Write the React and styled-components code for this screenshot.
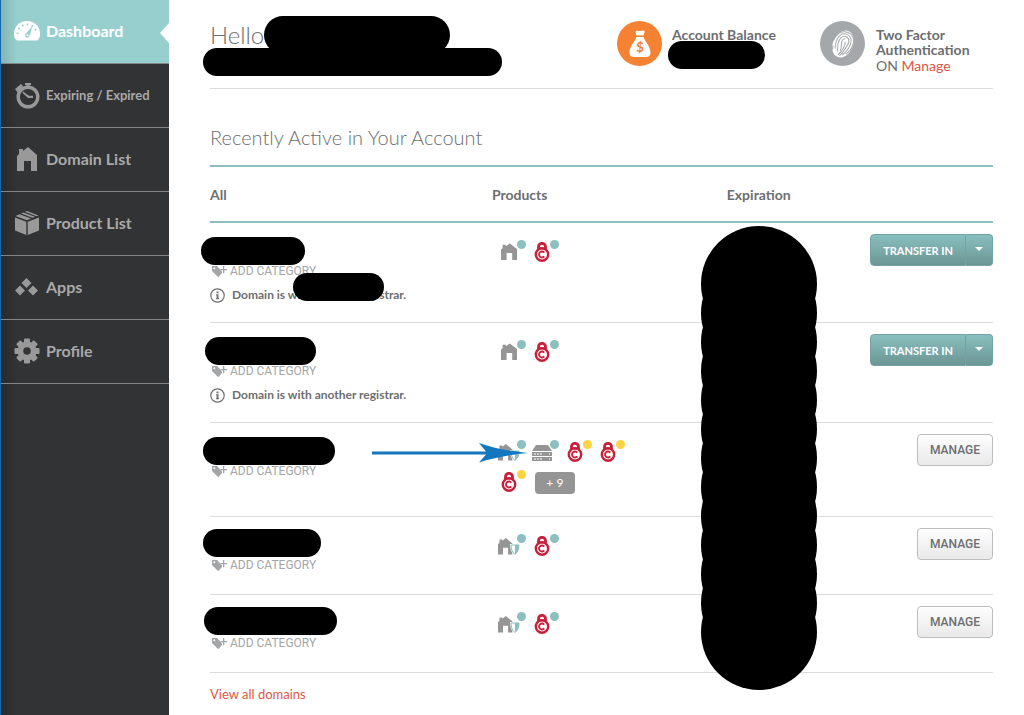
import styled, { createGlobalStyle } from "styled-components";

const colors = {
  text: "#6d6e70",
  light: "#a3a5a7",
  line: "#dcdcdc",
  teal: "#8bbfc0",
  yellow: "#ffd344",
  red: "#c8203a",
  link: "#e0563f",
  icon: "#959595",
};

const GlobalStyle = createGlobalStyle`
  * {
    box-sizing: border-box;
  }
  body {
    margin: 0;
    background: #fff;
    color: ${colors.text};
    font-family: Lato, "Open Sans", sans-serif;
    font-size: 14px;
  }
  a {
    text-decoration: none;
  }
`;

const Page = styled.div`
  display: flex;
  min-height: 100vh;
`;

const Sidebar = styled.nav`
  flex: 0 0 169px;
  border-left: 1px solid #1266b0;
  background: linear-gradient(to right, #29292b, #323335 16px);
`;

const NavItem = styled.a`
  position: relative;
  display: flex;
  align-items: center;
  gap: 6px;
  height: 64px;
  padding: 0 0 2px 13px;
  border-bottom: 1px solid #858585;
  color: ${(props) => (props.$active ? "#fff" : "#a9a9a9")};
  background: ${(props) =>
    props.$active
      ? "linear-gradient(to right, #82b5b4, #97cfce 16px)"
      : "transparent"};
  font-size: ${(props) => (props.$small ? 13 : 16)}px;
  font-weight: 700;

  svg {
    flex: none;
    fill: ${(props) => (props.$active ? "#fff" : "#999")};
  }

  &::after {
    content: "";
    display: ${(props) => (props.$active ? "block" : "none")};
    position: absolute;
    right: 0;
    top: 23px;
    border: 10px solid transparent;
    border-left: 0;
    border-right: 9px solid #fff;
  }
`;

const Main = styled.main`
  flex: 1;
  min-width: 0;
  padding: 0 31px 0 41px;
`;

const Header = styled.header`
  display: flex;
  height: 89px;
  border-bottom: 1px solid ${colors.line};
`;

const Greeting = styled.div`
  position: relative;
  flex: 1;
  padding-top: 21px;
`;

const Hello = styled.h1`
  margin: 0;
  font-size: 24px;
  line-height: 28px;
  font-weight: 300;
`;

const Stat = styled.div`
  position: relative;
  display: flex;
  gap: ${(props) => props.$gap}px;
  width: ${(props) => props.$width}px;
  padding-top: 21px;
`;

const StatIcon = styled.div`
  display: flex;
  align-items: center;
  justify-content: center;
  flex: none;
  width: 45px;
  height: 45px;
  border-radius: 50%;
  color: #fff;
  background: ${(props) => props.$color};
`;

const StatText = styled.div`
  padding-top: 6px;
  line-height: 15px;

  strong {
    display: block;
  }
  span {
    display: block;
    line-height: 18px;
  }
`;

const TextLink = styled.a`
  color: ${colors.link};
`;

const Title = styled.h2`
  margin: 0;
  padding: 36px 0 16px;
  border-bottom: 2px solid ${colors.teal};
  font-size: 20px;
  line-height: 24px;
  font-weight: 300;
`;

const Table = styled.table`
  width: 100%;
  table-layout: fixed;
  border-collapse: separate;
  border-spacing: 0;

  th {
    height: 56px;
    padding: 0;
    border-bottom: 2px solid ${colors.teal};
    text-align: left;
  }
  td {
    position: relative;
    height: 78px;
    padding: 11px 0 18px;
    border-bottom: 1px solid ${colors.line};
    vertical-align: top;
  }
`;

const DomainName = styled.div`
  height: 28px;
`;

const Redaction = styled.span`
  position: absolute;
  left: ${(props) => props.$left}px;
  top: ${(props) => props.$top}px;
  width: ${(props) => props.$width}px;
  height: ${(props) => props.$height || 28}px;
  border-radius: 20px;
  background: #000;
`;

const CategoryButton = styled.button`
  display: flex;
  align-items: center;
  gap: 2px;
  height: 18px;
  padding: 0 0 0 2px;
  border: 0;
  background: none;
  color: ${colors.light};
  font: 400 12px/18px Roboto, sans-serif;
`;

const Note = styled.p`
  display: flex;
  align-items: center;
  gap: 7px;
  margin: 6px 0 0;
  font-size: 12px;
  line-height: 18px;
  font-weight: 700;
`;

const Products = styled.div`
  display: flex;
  flex-wrap: wrap;
  width: 136px;
  padding: 0 0 4px 1px;
`;

const Slot = styled.span`
  position: relative;
  display: flex;
  justify-content: center;
  width: 33px;
  height: 30px;
  padding-top: 8px;

  &::after {
    content: "";
    position: absolute;
    left: 24px;
    top: 6px;
    width: 9px;
    height: 9px;
    border-radius: 50%;
    background: ${(props) => (props.$expiring ? colors.yellow : colors.teal)};
  }
`;

const MoreButton = styled.button`
  width: 40px;
  height: 22px;
  margin: 8px 0 0 9px;
  padding: 0;
  border: 0;
  border-radius: 4px;
  background: ${colors.icon};
  color: #fff;
  font: 400 12px/22px Lato, sans-serif;
`;

const Actions = styled.div`
  display: flex;
  justify-content: flex-end;
`;

const Button = styled.button`
  height: 32px;
  padding: 0 12px;
  border: 1px solid #bdbdbd;
  border-radius: 4px;
  background: linear-gradient(#fefefe, #e9e9e9);
  color: ${colors.text};
  font: 500 12px Roboto, sans-serif;
`;

const TealButton = styled(Button)`
  border-color: #74a3a3;
  border-radius: 4px 0 0 4px;
  background: linear-gradient(#88bfbe, #6c9695);
  color: #fff;
  font: 700 11px Lato, sans-serif;
`;

const CaretButton = styled(TealButton)`
  display: flex;
  align-items: center;
  justify-content: center;
  width: 27px;
  padding: 0 0 2px;
  border-left: 0;
  border-radius: 0 4px 4px 0;
`;

const ColumnMask = styled.svg`
  position: absolute;
  z-index: 1;
  left: -27px;
  top: 2px;
`;

const Arrow = styled.svg`
  position: absolute;
  z-index: 1;
  left: -121px;
  top: 19px;
`;

const Footer = styled.p`
  margin: 0;
  padding: 12px 0;
  line-height: 18px;
  font-size: 13px;
`;

const housePath = "M0 24V9l2-2V2h4v2l5-4 9 8v16h-6V14H7v10z";

const GaugeIcon = () => (
  <svg width="26" height="20" viewBox="0 0 26 20">
    <path d="M3 19.500C1 18.500 0 16 0 13 0 5.500 5.500 0 13 0s13 5.500 13 13c0 3-1 5.500-3 6.500z" />
    <path
      d="M3.500 13a9.500 9.500 0 0 1 19 0"
      fill="none"
      stroke="#97cfce"
      strokeWidth="2"
      strokeDasharray="1.500 3.400"
    />
    <path d="M18.500 5l-3 10a2.300 2.300 0 1 1-3.500-2.500z" fill="#97cfce" />
    <circle cx="13.500" cy="14.200" r="1" />
  </svg>
);

const ClockIcon = () => (
  <svg width="26" height="28" viewBox="0 0 26 28">
    <circle cx="14" cy="16" r="9.800" fill="none" stroke="#999" strokeWidth="3.400" />
    <path d="M11 2h6v2h-1.500v3h-3V4H11zM1 8l6-5 2 2-5 7zM9 10.500l6 4.300h4V17h-5l-5.500-5z" />
  </svg>
);

const HomeIcon = () => (
  <svg width="26" height="24" viewBox="-3 0 26 24">
    <path d={housePath} />
  </svg>
);

const BoxIcon = () => (
  <svg width="26" height="26" viewBox="0 0 26 26">
    <path d="M1 7.500l11.300 4.200V25L1 20.500zM25 7.500l-11.300 4.200V25L25 20.500zM1.500 6l4-1.800L17 8.500l-4 1.700zM7 3.500l2.300-1L21 6.800l-2.500 1zM10.800 1.800L13 1l11.500 4.500-2 .8z" />
  </svg>
);

const AppsIcon = () => (
  <svg width="26" height="18" viewBox="0 0 26 18">
    <path d="M12.500 0l5 5-5 5-5-5zM6 7.500l5 5-5 5-5-5zM19 7.500l5 5-5 5-5-5z" />
  </svg>
);

const GearIcon = () => (
  <svg width="26" height="26" viewBox="0 0 26 26">
    {[0, 45, 90, 135].map((angle) => (
      <rect
        key={angle}
        x="10"
        y="0.500"
        width="6"
        height="25"
        rx="1"
        transform={`rotate(${angle} 13 13)`}
      />
    ))}
    <circle cx="13" cy="13" r="9.500" />
    <circle cx="13" cy="13" r="3.800" fill="#323335" />
  </svg>
);

const MoneyBagIcon = () => (
  <svg width="22" height="28" viewBox="0 0 22 28">
    <path
      d="M7 1c2-1 3 .5 4.500 0S14 0 15.500 1c.6 1-.7 3-1 4.500h-7C7.200 4 6 2 7 1zM7.500 7h7c1 4 7 9 7 15.500 0 3-1.500 4.500-4.500 4.500H5c-3 0-4.500-1.500-4.500-4.500C.5 16 6.500 11 7.500 7z"
      fill="#fff"
    />
    <text
      x="11"
      y="22"
      textAnchor="middle"
      fontSize="13"
      fontWeight="700"
      fill="#f58233"
    >
      $
    </text>
  </svg>
);

const FingerprintIcon = () => (
  <svg width="28" height="30" viewBox="0 0 28 30">
    <g transform="rotate(24 14 15)">
      <ellipse cx="14" cy="15" rx="10" ry="14" fill="#fff" />
      <g fill="none" stroke="#a5a8ab">
        <path d="M14 9.500c-2.500 0-2.500 4-1.500 6s2 4 1.500 7" />
        <path d="M11.500 24c0-3-1.500-4.500-2.200-7.500C8.500 12 9.500 7 14 7s5 5 4.500 8-1 8-3 12" />
        <path d="M8.500 22.500C8 19.500 6.500 18 6.700 13 7 8 9.500 4.500 14 4.500s7 4 7 9-1.500 9-3.500 12" />
        <path d="M4 16c-.5-7 3-13.500 10-13.500S23.500 8 23.500 13s-1 7.500-3 10" />
        <path d="M15 12c1.500 3 1.500 8-1 15M5.500 20.500c.5 1 .8 2.500 1 4" />
      </g>
    </g>
  </svg>
);

const TagIcon = () => (
  <svg width="16" height="12" viewBox="0 0 16 12" fill="#a3a5a7">
    <path d="M0 1h5l5 5.500V8l-3.500 4H6L0 6z" />
    <circle cx="2.300" cy="3.200" r="1" fill="#fff" />
    <path d="M6 1l5 5" stroke="#fff" />
    <path d="M11 1h1.300v3H15v1.300h-2.700v3H11v-3H8.500V4H11z" />
  </svg>
);

const InfoIcon = () => (
  <svg width="15" height="15" viewBox="0 0 15 15" fill="#6d6e70">
    <circle cx="7.500" cy="7.500" r="6.700" fill="none" stroke="#6d6e70" strokeWidth="1.200" />
    <path d="M6.500 3.500h2v1.700h-2zM6 6.300h2.500v4h.7v1H5.900v-1h.7v-3H6z" />
  </svg>
);

const HouseProduct = () => (
  <svg width="16" height="18" viewBox="0 -2 20 26" preserveAspectRatio="none">
    <path d={housePath} fill={colors.icon} />
  </svg>
);

const ShieldedHouse = () => (
  <svg width="22" height="20" viewBox="0 0 22 20">
    <g transform="translate(0 2) scale(.72 .69)">
      <path d={housePath} fill={colors.icon} />
    </g>
    <path
      d="M12 8h10c0 5.500-1.500 8.500-4.900 11.500C13.500 17 12 14 12 8z"
      fill="#fff"
    />
    <path
      d="M13 9h8c0 4.500-1.200 7-4 9.500-2.800-2.500-4-5-4-9.500z"
      fill="none"
      stroke="#8bbfc0"
    />
    <path d="M17 9h4c0 4.500-1.200 7-4 9.500z" fill="#8bbfc0" />
  </svg>
);

const ServerProduct = () => (
  <svg width="20" height="19" viewBox="0 0 20 19" fill={colors.icon}>
    <path d="M4 3h12l4 6H0zM0 10h20v4H0zM0 15h20v4H0z" />
    <path d="M2 12h2m1 0h2m1 0h2m7 0h1M2 17h2m1 0h2m1 0h2m7 0h1" stroke="#fff" />
  </svg>
);

const LockProduct = () => (
  <svg width="16" height="20" viewBox="0 0 16 20" fill="none" stroke={colors.red}>
    <path d="M4.500 7V4.800a3.500 3.500 0 0 1 7 0V7" strokeWidth="2.800" />
    <circle cx="8" cy="12.500" r="6.200" strokeWidth="2.400" fill="#fff" />
    <path d="M4 6.500h8" strokeWidth="2" />
    <path d="M10.300 10.600a3 3 0 1 0 0 3.800" strokeWidth="1.800" />
  </svg>
);

const icons = {
  house: HouseProduct,
  shield: ShieldedHouse,
  server: ServerProduct,
  lock: LockProduct,
};

const navigation = [
  { label: "Dashboard", Icon: GaugeIcon, active: true },
  { label: "Expiring / Expired", Icon: ClockIcon, small: true },
  { label: "Domain List", Icon: HomeIcon },
  { label: "Product List", Icon: BoxIcon },
  { label: "Apps", Icon: AppsIcon },
  { label: "Profile", Icon: GearIcon },
];

const domains = [
  {
    mask: { $left: -9, $top: 14, $width: 104 },
    noteMask: { $left: 83, $top: 50, $width: 91 },
    products: ["house", "lock"],
    external: true,
    expirationMask: true,
  },
  {
    mask: { $left: -5, $top: 14, $width: 111 },
    products: ["house", "lock"],
    external: true,
  },
  {
    mask: { $left: -7, $top: 14, $width: 132 },
    products: ["shield", "server", "lock:expiring", "lock:expiring", "lock:expiring"],
    more: 9,
    arrow: true,
  },
  {
    mask: { $left: -7, $top: 12, $width: 118 },
    products: ["shield", "lock"],
  },
  {
    mask: { $left: -6, $top: 12, $width: 133 },
    products: ["shield", "lock"],
  },
];

function DomainRow({ domain }) {
  return (
    <tr>
      <td>
        <DomainName />
        <CategoryButton type="button">
          <TagIcon />
          ADD CATEGORY
        </CategoryButton>
        {domain.external && (
          <Note>
            <InfoIcon />
            Domain is with another registrar.
          </Note>
        )}
        <Redaction {...domain.mask} />
        {domain.noteMask && <Redaction {...domain.noteMask} />}
      </td>
      <td>
        <Products>
          {domain.products.map((product, index) => {
            const [name, state] = product.split(":");
            const Icon = icons[name];
            return (
              <Slot key={index} $expiring={state === "expiring"}>
                <Icon />
              </Slot>
            );
          })}
          {domain.more && <MoreButton type="button">+ {domain.more}</MoreButton>}
        </Products>
        {domain.arrow && (
          <Arrow width="158" height="22" viewBox="0 0 158 22" fill="#1277bf">
            <path d="M1 9.500h114l-7-8.500c14 5 32 8.500 49 10-17 1.500-35 5-49 9.500l7-8H1z" />
          </Arrow>
        )}
      </td>
      <td>
        {domain.expirationMask && (
          <ColumnMask width="118" height="466" viewBox="0 0 118 466">
            {Array.from({ length: 13 }, (_, i) => (
              <circle key={i} cx="59" cy={59 + i * 29} r="58" />
            ))}
          </ColumnMask>
        )}
      </td>
      <td>
        <Actions>
          {domain.external ? (
            <>
              <TealButton type="button">TRANSFER IN</TealButton>
              <CaretButton type="button" aria-label="More actions">
                <svg width="8" height="4" viewBox="0 0 8 4" fill="#fff">
                  <path d="M0 0h8L4 4z" />
                </svg>
              </CaretButton>
            </>
          ) : (
            <Button type="button">MANAGE</Button>
          )}
        </Actions>
      </td>
    </tr>
  );
}

function App() {
  return (
    <Page>
      <GlobalStyle />
      <Sidebar>
        {navigation.map(({ label, Icon, active, small }) => (
          <NavItem key={label} href="#" $active={active} $small={small}>
            <Icon />
            {label}
          </NavItem>
        ))}
      </Sidebar>
      <Main>
        <Header>
          <Greeting>
            <Hello>Hello</Hello>
            <Redaction $left={54} $top={16} $width={186} $height={38} />
            <Redaction $left={-7} $top={48} $width={299} />
          </Greeting>
          <Stat $gap={10} $width={203}>
            <StatIcon $color="#f58233">
              <MoneyBagIcon />
            </StatIcon>
            <StatText>
              <strong>Account Balance</strong>
            </StatText>
            <Redaction $left={51} $top={41} $width={97} />
          </Stat>
          <Stat $gap={11} $width={173}>
            <StatIcon $color="#a5a8ab">
              <FingerprintIcon />
            </StatIcon>
            <StatText>
              <strong>Two Factor Authentication</strong>
              <span>
                ON <TextLink href="#">Manage</TextLink>
              </span>
            </StatText>
          </Stat>
        </Header>
        <Title>Recently Active in Your Account</Title>
        <Table>
          <colgroup>
            <col width="36%" />
            <col width="30%" />
            <col width="16%" />
            <col width="18%" />
          </colgroup>
          <thead>
            <tr>
              <th>All</th>
              <th>Products</th>
              <th>Expiration</th>
              <th aria-label="Actions" />
            </tr>
          </thead>
          <tbody>
            {domains.map((domain, index) => (
              <DomainRow key={index} domain={domain} />
            ))}
          </tbody>
        </Table>
        <Footer>
          <TextLink href="#">View all domains</TextLink>
        </Footer>
      </Main>
    </Page>
  );
}

export default App;
